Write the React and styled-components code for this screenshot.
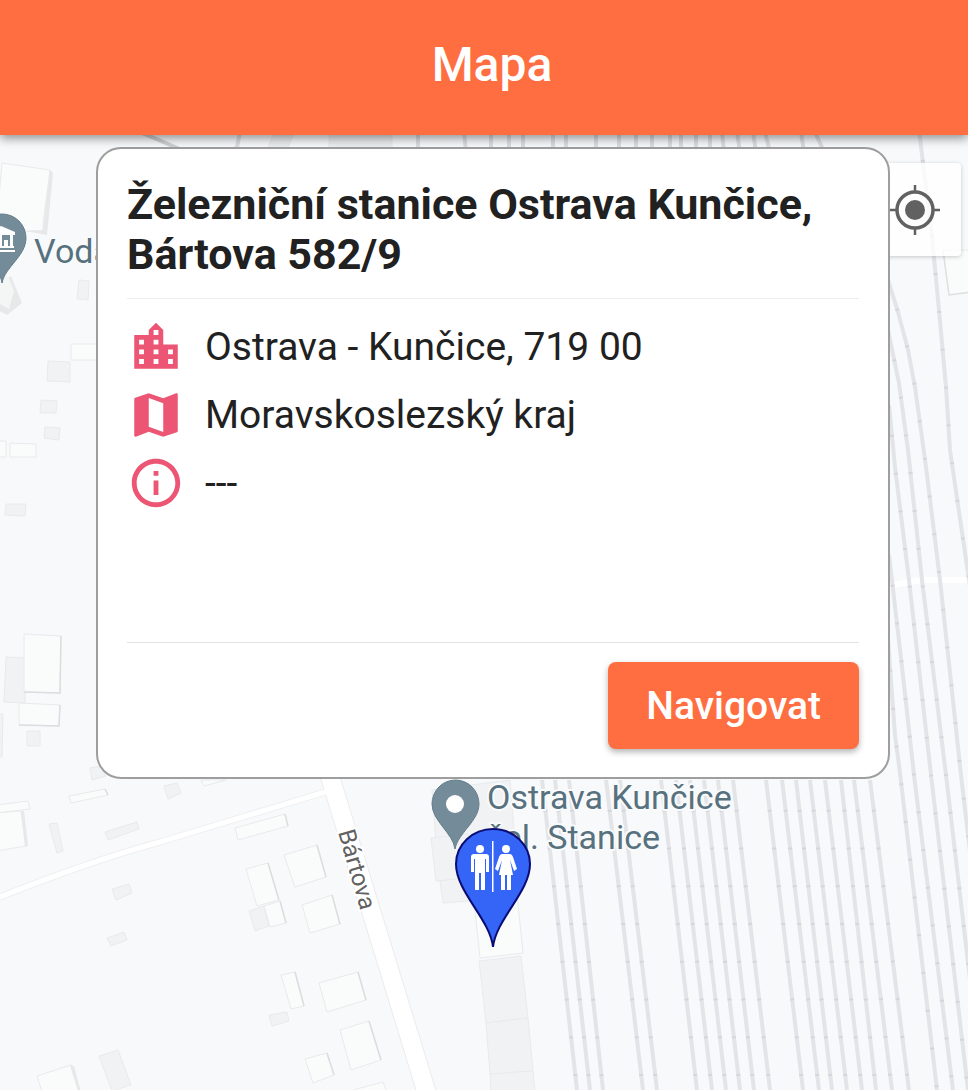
import React from 'react';
import styled, { createGlobalStyle } from 'styled-components';

const GlobalStyle = createGlobalStyle`
  *, *::before, *::after { box-sizing: border-box; }
  body { margin: 0; background: #f8f9fb; font-family: Roboto, "Liberation Sans", sans-serif; }
`;

const Page = styled.div`
  min-height: 100vh;
  display: flex;
  flex-direction: column;
`;

const AppBar = styled.header`
  position: relative;
  z-index: 2;
  display: flex;
  align-items: center;
  justify-content: center;
  height: 135px;
  padding-left: 16px;
  background: #ff6e40;
  box-shadow: 0 3px 10px rgba(0, 0, 0, 0.45);
`;

const AppTitle = styled.h1`
  margin: 0;
  padding-bottom: 6px;
  color: #fff;
  font-size: 48px;
  line-height: 56px;
  font-weight: 500;
`;

const MapArea = styled.main`
  position: relative;
  flex: 1;
  overflow: hidden;
  padding: 12px 78px 32px 96px;
`;

const MapCanvas = styled.svg`
  position: absolute;
  inset: 0;
  width: 100%;
  height: 100%;
  font-family: Roboto, "Liberation Sans", sans-serif;
`;

const LocateButton = styled.button`
  position: absolute;
  top: 28px;
  right: 7px;
  width: 93px;
  height: 93px;
  padding: 0;
  border: 0;
  border-radius: 4px;
  background: rgba(255, 255, 255, 0.78);
  box-shadow: 0 1px 4px rgba(0, 0, 0, 0.2);
  display: grid;
  place-items: center;
  color: #616161;
`;

const Card = styled.article`
  position: relative;
  display: flex;
  flex-direction: column;
  min-height: 632px;
  padding: 30px 29px 28px;
  border: 2px solid #9e9e9e;
  border-radius: 25px;
  background: #fff;
  color: #212121;
`;

const CardTitle = styled.h2`
  margin: 0;
  padding-bottom: 19px;
  border-bottom: 1px solid #ececec;
  font-size: 43px;
  line-height: 50px;
  font-weight: 700;
`;

const Details = styled.ul`
  flex: 1;
  margin: 0;
  padding: 14px 0;
  list-style: none;
`;

const Detail = styled.li`
  display: flex;
  align-items: center;
  gap: 20px;
  height: 68px;
  font-size: 39px;
  line-height: 48px;

  svg { flex: none; color: #ec5574; }
`;

const CardActions = styled.footer`
  display: flex;
  justify-content: flex-end;
  padding-top: 19px;
  border-top: 1px solid #e2e2e2;
`;

const PrimaryButton = styled.button`
  height: 87px;
  padding: 0 38px;
  border: 0;
  border-radius: 8px;
  background: #ff6e40;
  box-shadow: 0 3px 6px rgba(0, 0, 0, 0.3);
  color: #fff;
  font: 500 39px/48px Roboto, "Liberation Sans", sans-serif;
`;

const icons = {
  city: 'M15 11V5l-3-3-3 3v2H3v14h18V11h-6zm-8 8H5v-2h2v2zm0-4H5v-2h2v2zm0-4H5V9h2v2zm6 8h-2v-2h2v2zm0-4h-2v-2h2v2zm0-4h-2V9h2v2zm0-4h-2V5h2v2zm6 12h-2v-2h2v2zm0-4h-2v-2h2v2z',
  map: 'M20.500 3l-.16.03L15 5.100 9 3 3.360 4.900c-.21.07-.36.25-.36.48V20.500c0 .28.22.5.5.5l.16-.03L9 18.900l6 2.100 5.640-1.900c.21-.07.36-.25.36-.48V3.500c0-.28-.22-.5-.5-.5zM15 19l-6-2.110V5l6 2.110V19z',
  info: 'M11 7h2v2h-2zm0 4h2v6h-2zm1-9C6.480 2 2 6.480 2 12s4.480 10 10 10 10-4.480 10-10S17.520 2 12 2zm0 18c-4.410 0-8-3.590-8-8s3.590-8 8-8 8 3.590 8 8-3.590 8-8 8z',
};

const Icon = ({ name }) => (
  <svg width="58" height="58" viewBox="0 0 24 24" fill="currentColor" aria-hidden="true">
    <path d={icons[name]} />
  </svg>
);

const tracks = [
  'M542 780L577 1090', 'M555 780L590 1090', 'M569 780L603 1090',
  'M606 780L643 1090', 'M620 780L657 1090', 'M661 780L697 1090',
  'M676 780L712 1090', 'M690 780L726 1090', 'M704 780L740 1090',
  'M718 780L754 1090', 'M733 780L770 1090', 'M766 780L803 1090',
  'M782 780L819 1090', 'M796 780L832 1090', 'M810 780L847 1090',
  'M825 780L862 1090', 'M841 780L876 1090', 'M854 780L892 1090',
  'M870 780L909 1090',
  'M888 640L895 735L900 773L937 1090',
  'M889 555L901 658L914 775L953 1090',
  'M889 405L895 467L909 580L931 775L968 1090',
  'M888 330L899 383L908 450L922 580L946 775L983 1090',
  'M888 280L898 312L908 350L915 387L926 467L940 580L961 775L998 1090',
  'M919 130L932 237L939 310L946 387L950 450L958 505L972 600',
];

const northTracks = 'M240 132L236 152M418 132V152M464 132L466 152M491 132V152M509 132V152M523 132V152M553 132V152M566 132V152M596 132V152M619 132V152M636 132V152M652 132V152M670 132V152M681 132V152M696 132V152M710 132V152M722 132L724 152M737 132L740 152M753 132L756 152M765 132L770 152M801 132L804 152M815 132L824 152';

const lightBuildings = [
  '-4,231 2,163 50,170 43,224 43,231',
  '71,344 99,344 99,360 71,360', '-4,441 6,441 6,457 -4,457', '10,443 36,444 36,457 10,457',
  '24,634 61,636 60,693 24,692', '19,703 60,705 59,726 19,725',
  '69,796 105,789 108,795 71,803', '-4,805 28,801 30,809 -4,813', '-4,813 21,811 26,846 -4,851',
  '201,780 226,780 204,786', '235,828 285,814 288,826 238,840',
  '246,869 268,863 279,900 257,906', '264,906 280,901 286,923 270,927',
  '284,855 317,845 326,877 295,887', '302,905 332,895 340,924 310,933',
  '281,975 295,972 304,1006 291,1009', '319,983 358,972 366,1000 327,1012',
  '340,1030 369,1021 381,1060 351,1070', '305,1059 327,1053 334,1075 313,1083',
  '353,1090 383,1082 387,1092 352,1094', '37,1076 71,1065 80,1092 42,1092',
  '474,902 517,894 523,953 480,958', '943,250 972,250 972,292 949,295',
];

const greyBuildings = [
  '79,280 89,281 88,300 77,299', '48,361 70,362 70,382 47,381', '41,400 57,401 56,413 40,413',
  '45,427 60,428 59,440 44,438', '6,504 26,504 25,516 5,515',
  '6,657 26,658 25,703 4,702', '27,731 40,731 40,746 27,746', '-4,714 3,714 2,757 -4,757',
  '90,768 101,766 106,776 92,780', '164,786 177,783 181,793 168,799',
  '49,824 57,823 63,851 57,853', '105,832 137,822 139,829 108,840',
  '112,889 129,884 132,893 116,900', '107,938 124,932 127,940 111,946',
  '249,911 264,906 269,926 255,931', '269,1015 287,1012 289,1021 272,1026',
  '99,1056 118,1050 131,1085 112,1091',
  '432,790 510,780 514,832 436,842', '431,838 468,834 474,878 436,881', '440,881 480,876 482,900 443,903',
  '479,961 521,956 528,1018 486,1023', '486,1023 528,1018 533,1071 490,1074', '490,1074 533,1071 535,1092 491,1092',
];

const buildingSides = [
  'M50 170L53 173L47 235L25 231L43 230Z', 'M1 282L11 276L22 303L7 315L-4 309Z',
  'M21 811L24 811L28 846L25 847Z', 'M29 801L31 809', 'M70 1065L74 1066L81 1092L78 1092Z',
];

const shadowEdges = 'M61 636L60 693L24 692M60 705L59 726L19 725M105 789L108 795M285 814L288 826M268 863L279 900M280 901L286 923M317 845L326 877M332 895L340 924M295 972L304 1006M358 972L366 1000M369 1021L381 1060M327 1053L334 1075';

const StreetMap = () => (
  <MapCanvas viewBox="0 135 968 955" preserveAspectRatio="xMidYMin slice" role="img" aria-label="Mapa okolí stanice">
    <rect x="-20" y="130" width="1010" height="980" fill="#f8f9fb" />
    <g stroke="#e9eaec" strokeWidth="1">
      <g fill="#f1f2f4">{greyBuildings.map((p) => <polygon key={p} points={p} />)}</g>
      <g fill="#fafbfb">{lightBuildings.map((p) => <polygon key={p} points={p} />)}</g>
      <path d="M329 130H392V152H329ZM275 130L266 152H286L296 130Z" fill="#edeef0" />
    </g>
    <g fill="#e7e8e9">{buildingSides.map((d) => <path key={d} d={d} />)}</g>
    <path d="M-2 281L8 276L14 291L9 309L-4 302Z" fill="#f4f5f5" />
    <path d={shadowEdges} fill="none" stroke="#dcddde" strokeWidth="1.500" />
    <path d="M943 250L949 295L972 292" fill="none" stroke="#dfe0e1" strokeWidth="1.500" />

    <g fill="none" strokeLinejoin="round">
      <path d="M-5 899Q90 861 160 842L335 789" stroke="#eeeff1" strokeWidth="7" />
      <path d="M328 770L432 1110" stroke="#ebecef" strokeWidth="20" />
      <path d="M-5 899Q90 861 160 842L335 789" stroke="#fff" strokeWidth="5" />
      <path d="M328 770L432 1110" stroke="#fff" strokeWidth="18" />
      <path d="M885 586L922 580L972 580" stroke="#fff" strokeWidth="6" />
    </g>

    <g fill="none">
      <path d="M140 132L182 150" stroke="#cfd0d2" strokeWidth="4" />
      <path d={northTracks} stroke="#dcdde1" strokeWidth="4" />
      {tracks.map((d) => <path key={d} d={d} stroke="#e3e4e8" strokeWidth="4" />)}
      {tracks.map((d) => <path key={d} d={d} stroke="#d5d6dc" strokeWidth="4" strokeDasharray="2 36" strokeDashoffset="8" />)}
    </g>

    <g fill="#748c99" stroke="#657e8b" strokeWidth="1">
      <path d="M2 283C0 267-22 256-22 238A24 24 0 0 1 26 238C26 256 5 267 2 283Z" />
      <path d="M455 849C453 833 432 821 432 804A23.500 24 0 0 1 479 804C479 821 458 833 455 849Z" />
    </g>
    <circle cx="455" cy="804" r="9" fill="#fff" />
    <g fill="#fff">
      <path d="M-13 232L1 226L15 232V235H-13Z" />
      <path d="M-10 235H-7V248H-10ZM-1 235H2V248H-1ZM10 235H13V248H10ZM4 240H8V248H4Z" />
      <path d="M-13 246H14V248H-13ZM-14 250H15V252H-14Z" />
    </g>

    <g fill="#57717e" stroke="#f9fafb" strokeWidth="4" paintOrder="stroke" strokeLinejoin="round" fontSize="34">
      <text x="34" y="263">Voda</text>
      <text x="487" y="809">Ostrava Kunčice</text>
      <text x="487" y="849">žel. Stanice</text>
    </g>
    <text transform="translate(338 832) rotate(74)" fill="#616161" stroke="#fff" strokeWidth="4" paintOrder="stroke" fontSize="24">Bártova</text>

    <path d="M493 947C490 919 456 892 456 864A37 35 0 0 1 530 864C530 892 496 919 493 947Z" fill="#3565f6" stroke="#0b0b75" strokeWidth="2" />
    <g fill="#fff">
      <path d="M492 841H493.500V892H492Z" />
      <circle cx="480" cy="849" r="4" />
      <path d="M474 854H486Q489 854 489 857V872H486V859H485V890H481V873H479V890H475V859H474V872H471V857Q471 854 474 854Z" />
      <circle cx="506" cy="849" r="4" />
      <path d="M502 854H510Q512 854 513 857L517 869L514 871L510 860L513 875H511V890H507V875H505V890H501V875H499L502 860L498 871L495 869L499 857Q500 854 502 854Z" />
    </g>
  </MapCanvas>
);

export default function App() {
  return (
    <Page>
      <GlobalStyle />
      <AppBar><AppTitle>Mapa</AppTitle></AppBar>
      <MapArea>
        <StreetMap />
        <LocateButton type="button" aria-label="Moje poloha">
          <svg width="50" height="50" viewBox="0 0 50 50" fill="none" stroke="currentColor" strokeWidth="3.500" aria-hidden="true">
            <circle cx="25" cy="25" r="18" />
            <circle cx="25" cy="25" r="10" fill="currentColor" stroke="none" />
            <path d="M25 0V8M25 42V50M0 25H8M42 25H50" strokeWidth="2.500" />
          </svg>
        </LocateButton>
        <Card>
          <CardTitle>Železniční stanice Ostrava Kunčice, Bártova 582/9</CardTitle>
          <Details>
            <Detail><Icon name="city" />Ostrava - Kunčice, 719 00</Detail>
            <Detail><Icon name="map" />Moravskoslezský kraj</Detail>
            <Detail><Icon name="info" />---</Detail>
          </Details>
          <CardActions><PrimaryButton type="button">Navigovat</PrimaryButton></CardActions>
        </Card>
      </MapArea>
    </Page>
  );
}
